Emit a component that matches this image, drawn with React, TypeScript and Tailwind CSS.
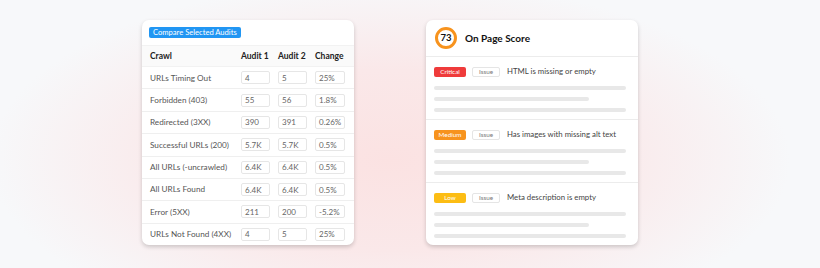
import React from "react";

const rows = [
  { name: "URLs Timing Out", a: "4", b: "5", c: "25%" },
  { name: "Forbidden (403)", a: "55", b: "56", c: "1.8%" },
  { name: "Redirected (3XX)", a: "390", b: "391", c: "0.26%" },
  { name: "Successful URLs (200)", a: "5.7K", b: "5.7K", c: "0.5%" },
  { name: "All URLs (-uncrawled)", a: "6.4K", b: "6.4K", c: "0.5%" },
  { name: "All URLs Found", a: "6.4K", b: "6.4K", c: "0.5%" },
  { name: "Error (5XX)", a: "211", b: "200", c: "-5.2%" },
  { name: "URLs Not Found (4XX)", a: "4", b: "5", c: "25%" },
];

const issues = [
  { level: "Critical", color: "bg-[#ef3b3b]", text: "HTML is missing or empty" },
  { level: "Medium", color: "bg-[#f7931e]", text: "Has images with missing alt text" },
  { level: "Low", color: "bg-[#fcbd14]", text: "Meta description is empty" },
];

function Box({ value }: { value: string }) {
  return (
    <div className="h-[13px] flex items-center pl-[3px] bg-white border border-[#e6e6e6] rounded-[2px] text-[8px] text-[#666]">
      {value}
    </div>
  );
}

function AuditCard() {
  return (
    <div className="w-[212px] h-[225px] bg-white rounded-[7px] shadow-[0_2px_4px_rgba(0,0,0,0.18)] flex flex-col overflow-hidden">
      <div className="flex px-[7px] pt-[7px] pb-[7px]">
        <div className="flex items-center h-[11px] px-[4px] rounded-[2px] bg-[#2196f3] text-white text-[7.6px] leading-none">
          Compare Selected Audits
        </div>
      </div>
      <div className="grid grid-cols-[83px_29px_29px_30px] gap-x-[8px] items-center h-[22px] px-[8px] bg-[#fafafa] border-y border-[#f2f2f2] text-[8.5px] font-bold text-[#222]">
        <div>Crawl</div>
        <div>Audit 1</div>
        <div>Audit 2</div>
        <div>Change</div>
      </div>
      {rows.map((r, i) => (
        <div
          key={i}
          className={`grid grid-cols-[83px_29px_29px_30px] gap-x-[8px] items-center flex-1 px-[8px] text-[8.2px] text-[#555] ${i < rows.length - 1 ? "border-b border-[#efefef]" : ""}`}
        >
          <div className="whitespace-nowrap">{r.name}</div>
          <Box value={r.a} />
          <Box value={r.b} />
          <Box value={r.c} />
        </div>
      ))}
    </div>
  );
}

function ScoreCard() {
  return (
    <div className="w-[212px] h-[225px] bg-white rounded-[7px] shadow-[0_2px_4px_rgba(0,0,0,0.18)] flex flex-col overflow-hidden">
      <div className="h-[37px] flex items-center px-[9px] gap-[8px] border-b border-[#ececec]">
        <div className="w-[22px] h-[22px] rounded-full border-[3px] border-[#f7931e] flex items-center justify-center text-[9.5px] font-bold text-[#111]">
          73
        </div>
        <div className="text-[10px] font-bold text-[#111]">On Page Score</div>
      </div>
      {issues.map((it, i) => (
        <div key={i} className={`flex-1 px-[8px] pt-[10px] ${i < issues.length - 1 ? "border-b border-[#ececec]" : ""}`}>
          <div className="flex items-center h-[10px]">
            <div className={`w-[32px] h-[10px] rounded-[2px] ${it.color} text-white text-[6.3px] flex items-center justify-center`}>
              {it.level}
            </div>
            <div className="ml-[6px] w-[28px] h-[10px] rounded-[2px] border border-[#e5e5e5] text-[#777] text-[6.3px] flex items-center justify-center">
              Issue
            </div>
            <div className="ml-[7px] text-[7.8px] text-[#444]">{it.text}</div>
          </div>
          <div className="mt-[9px] flex flex-col gap-[7px]">
            <div className="h-[4px] w-[192px] rounded-full bg-[#e8e8e8]" />
            <div className="h-[4px] w-[155px] rounded-full bg-[#e8e8e8]" />
            <div className="h-[4px] w-[192px] rounded-full bg-[#e8e8e8]" />
          </div>
        </div>
      ))}
    </div>
  );
}

export default function App() {
  return (
    <div
      className="w-[820px] h-[268px] overflow-hidden bg-[#f7f8fa] bg-[radial-gradient(ellipse_400px_180px_at_390px_160px,#fbe2e2_0%,#fae8e9_50%,#f7f8fa_100%)] flex items-start pl-[142px] pt-[20px] gap-[72px]"
      style={{ fontFamily: "Lato, 'Open Sans', sans-serif" }}
    >
      <AuditCard />
      <ScoreCard />
    </div>
  );
}
